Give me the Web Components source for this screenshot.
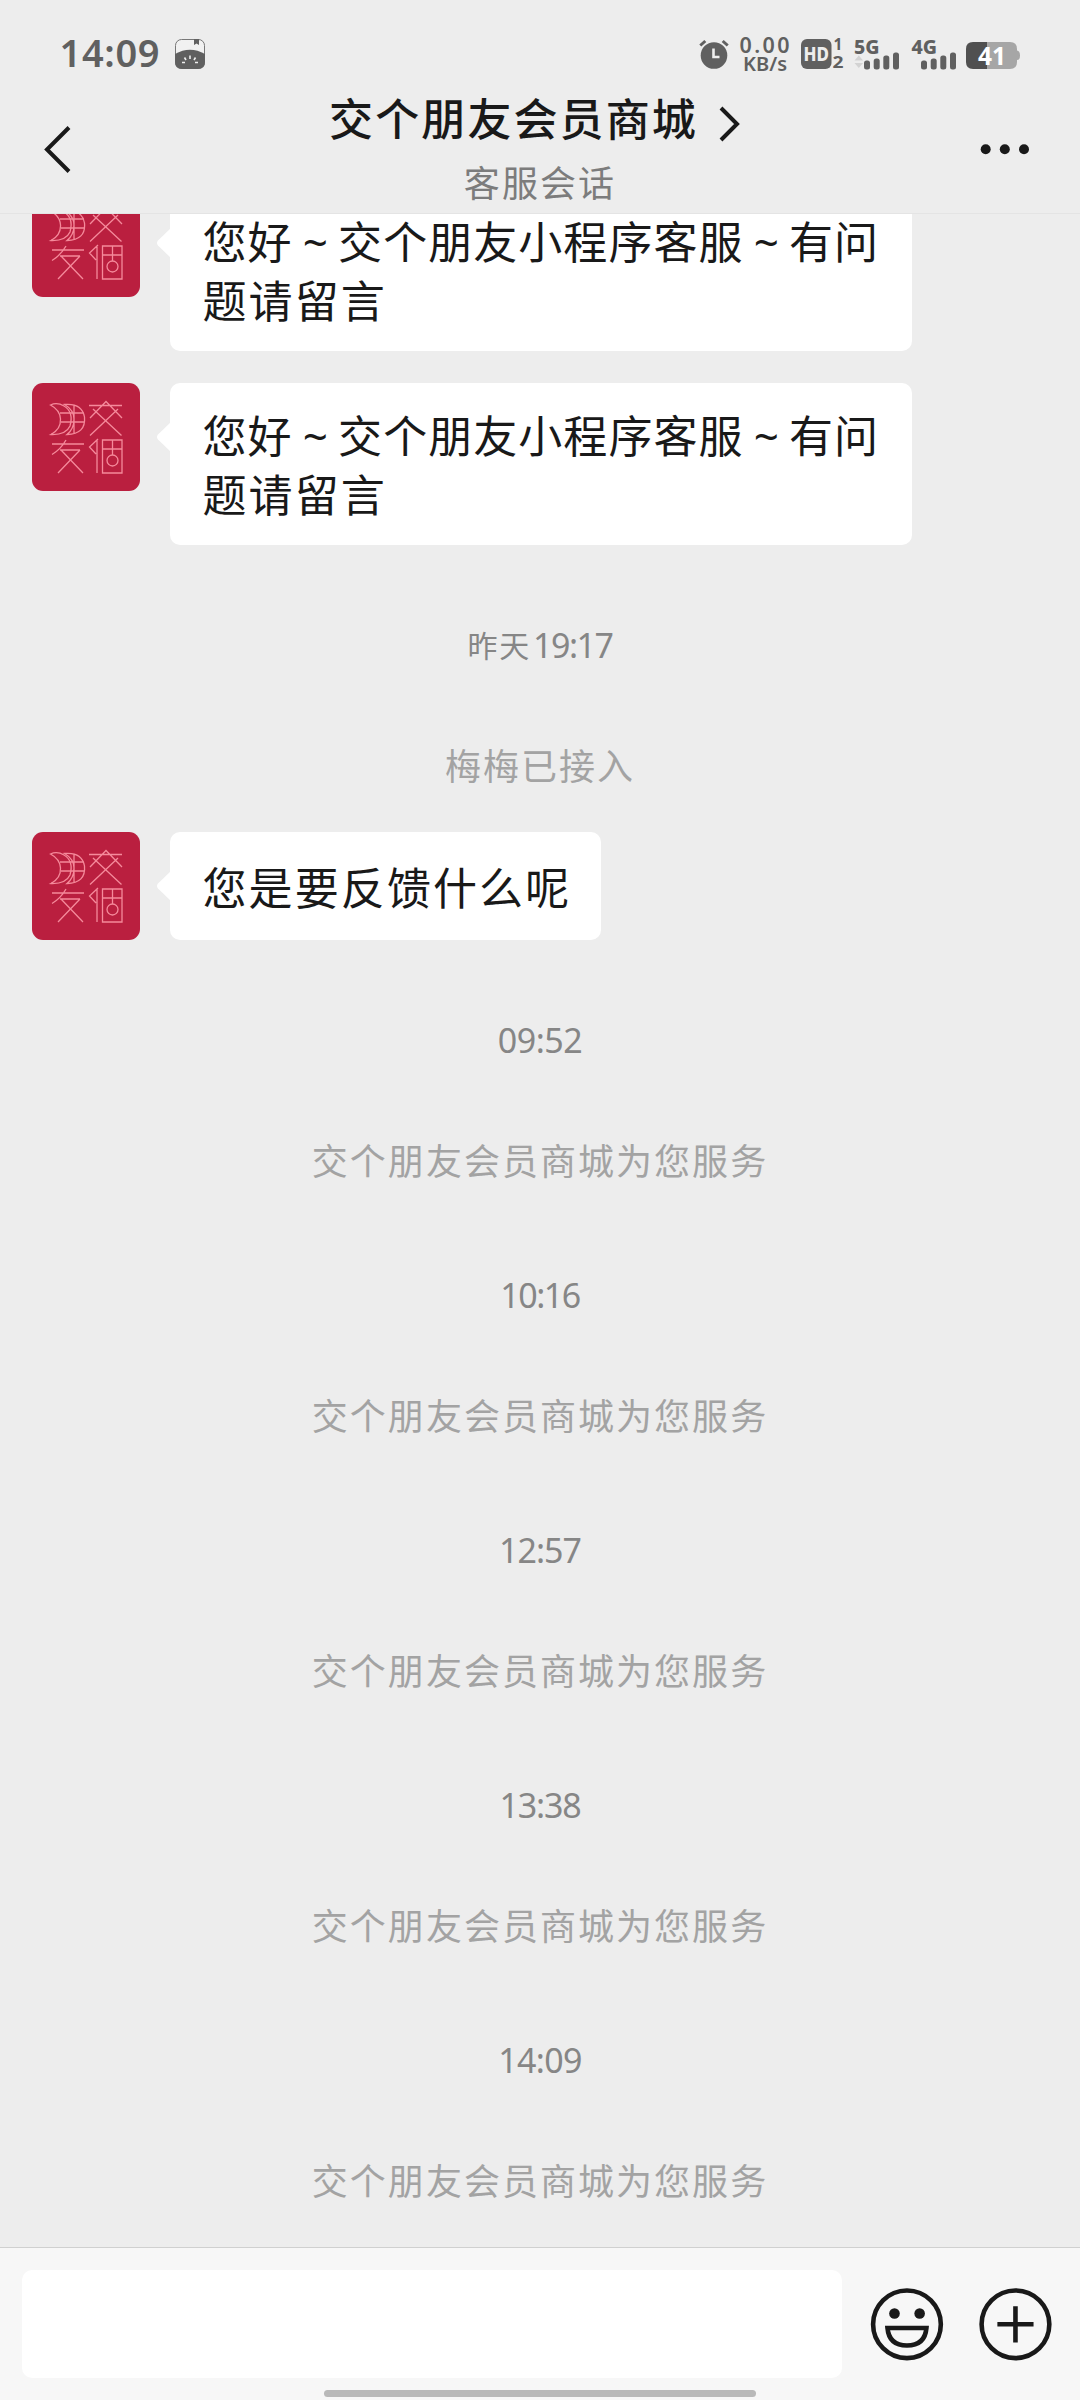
<!DOCTYPE html>
<html lang="zh-CN">
<head>
<meta charset="utf-8">
<title>交个朋友会员商城</title>
<style>
html,body{margin:0;padding:0}
body{background:#ededed;font-family:"Noto Sans CJK SC","Noto Sans",sans-serif;color:#191919}
</style>
</head>
<body>
<chat-app></chat-app>
<script>
function define(name, html) {
  const t = document.createElement('template');
  t.innerHTML = html;
  customElements.define(name, class extends HTMLElement {
    constructor() {
      super();
      this.attachShadow({mode: 'open'}).appendChild(t.content.cloneNode(true));
    }
  });
}

define('status-bar', `<style>
:host{display:flex;justify-content:space-between;height:80px;flex:none;color:#606060}
svg{display:block;font-family:"Noto Sans",sans-serif;fill:#606060}
</style>
<svg width="240" height="80" viewBox="0 0 240 80">
  <text x="59.500" y="67" font-size="38" font-weight="600" textLength="100">14:09</text>
  <rect x="175.500" y="39.500" width="29" height="29" rx="6" fill="#f1f1f1" stroke="#777" stroke-width="1"/>
  <path d="M175 54Q190 45.500 205 54V62Q205 69 198 69H182Q175 69 175 62Z"/>
  <path d="M194 39h5v6l-2.500-1.500-2.500 1.500z"/>
  <path d="M190 55.500v3.500M184.500 57.500l1.500 2.500M195.500 57.500l-1.500 2.500M182 62.500h3M195 62.500h3" stroke="#eee" stroke-width="1.600" fill="none"/>
</svg>
<svg width="400" height="80" viewBox="680 0 400 80">
  <circle cx="714" cy="55.500" r="13.300"/>
  <path d="M700.300 45.500l5-4.500M727.700 45.500l-5-4.500" stroke="#606060" stroke-width="3"/>
  <path d="M713.500 48.500v8.500h6" fill="none" stroke="#eee" stroke-width="2.600"/>
  <text x="739.500" y="52.500" font-size="21.500" font-weight="600" textLength="50">0.00</text>
  <text x="743" y="70.500" font-size="19" font-weight="600" textLength="44" lengthAdjust="spacingAndGlyphs">KB/s</text>
  <rect x="801" y="39" width="30.500" height="30" rx="6"/>
  <text x="803.500" y="61" font-size="20" font-weight="800" fill="#ededed" textLength="25.500" lengthAdjust="spacingAndGlyphs">HD</text>
  <text x="833.500" y="50" font-size="15.500" font-weight="700" textLength="9">1</text>
  <text x="832.500" y="67.500" font-size="16" font-weight="700" textLength="11" lengthAdjust="spacingAndGlyphs">2</text>
  <text x="854" y="53.700" font-size="20" font-weight="800" textLength="25.500" lengthAdjust="spacingAndGlyphs">5G</text>
  <path d="M854.500 60.500l4.300-5 4.300 5zM854.500 63l4.300 5 4.300-5z" fill="#d3d3d3"/>
  <rect x="864" y="60.500" width="6" height="9" rx="2.500"/><rect x="873.700" y="58.500" width="6" height="11" rx="2.500"/><rect x="883.300" y="55.500" width="6" height="14" rx="2.500"/><rect x="893" y="52.500" width="6" height="17" rx="2.500"/>
  <text x="911.500" y="53.700" font-size="20" font-weight="800" textLength="25.500" lengthAdjust="spacingAndGlyphs">4G</text>
  <rect x="921" y="60.500" width="6" height="9" rx="2.500"/><rect x="930.700" y="58.500" width="6" height="11" rx="2.500"/><rect x="940.300" y="55.500" width="6" height="14" rx="2.500"/><rect x="950" y="52.500" width="6" height="17" rx="2.500"/>
  <path d="M973 42H1010Q1017 42 1017 49V50.500Q1020 51 1020 55.500T1017 60V62Q1017 69 1010 69H973Z" fill="#a6a6a6"/>
  <path d="M987 42V69H973Q966 69 966 62V49Q966 42 973 42Z" fill="#505050"/>
  <text x="978" y="64.500" font-size="24.500" font-weight="700" fill="#fff" textLength="28">41</text>
</svg>`);

define('chat-header', `<style>
:host{display:grid;grid-template-columns:160px 1fr 160px;height:133px;flex:none;border-bottom:1px solid #e4e4e4;background:#ededed;position:relative;z-index:1}
.mid{display:flex;flex-direction:column;align-items:center}
.title{display:flex;align-items:center;font-size:44px;font-weight:500;letter-spacing:2.100px;height:60px;line-height:60px;margin:7px 10px 0 0;white-space:nowrap}
.title svg{margin:13px 0 0 21px}
.sub{font-size:36px;letter-spacing:2.100px;color:#7c7c7c;line-height:60px;height:60px;margin-top:4px}
svg{display:block}
</style>
<svg width="160" height="133" viewBox="0 80 160 133"><path d="M69 127.500L47 149.500L69 171.500" fill="none" stroke="#191919" stroke-width="4"/></svg>
<div class="mid"><div class="title"><span><slot name="title"></slot></span><svg width="22" height="36" viewBox="0 0 22 36"><path d="M2 2l16 16-16 16" fill="none" stroke="#191919" stroke-width="4"/></svg></div><div class="sub"><slot name="sub"></slot></div></div>
<svg width="160" height="133" viewBox="920 80 160 133" fill="#191919"><circle cx="985.700" cy="149.300" r="5"/><circle cx="1004.800" cy="149.300" r="5"/><circle cx="1024" cy="149.300" r="5"/></svg>`);

define('brand-avatar', `<style>:host{display:block;width:108px;height:108px;flex:none}svg{display:block}</style>
<svg width="108" height="108" viewBox="0 0 108 108"><rect width="108" height="108" rx="11" fill="#ba1f3f"/>
<g fill="none" stroke="#f58a9b" stroke-width="1.300">
<path d="M18.500 22Q25 19 32 23Q42 29 38 43Q34 52 19 51.500Q29 46 28.500 36Q28 27 18.500 22Z"/>
<path d="M32.500 21.500Q50 20 52.500 34Q54 51 35 51.500Q42 46 42 36Q42 27 32.500 21.500ZM28 30H52M29 39H52M42 22V51"/>
<path d="M57 22.500H90M58 35L74 18.500L90 35M61 26L89.500 52.500M86 26L58 52.500"/>
<path d="M20 61H52M34 57Q29 66 20 71.500M28 67H48M29 67L51 90M48 67L26 90"/>
<path d="M66 56L57.500 64L64 71M65 57V90M70.500 57H90V90H70.500ZM70.500 66H90M80.500 57V72"/><circle cx="80.500" cy="77.500" r="5.500"/>
</g></svg>`);

define('chat-message', `<style>
:host{display:flex;align-items:flex-start;gap:29.500px;margin:32px 0 0 32px;flex:none}
.b{position:relative;background:#fff;border-radius:10px;padding:22px 30px 22px 33px;box-sizing:border-box;width:var(--bubble,auto);min-height:108px;font-size:44px;letter-spacing:2.100px;line-height:59px;white-space:nowrap}
.b svg{position:absolute;left:-14px;top:39px}
.t{display:block;padding-top:var(--shift,0)}
::slotted(.tight){letter-spacing:1.050px}
</style><brand-avatar></brand-avatar>
<div class="b"><svg width="15" height="30" viewBox="0 0 15 30"><path d="M15 0L2 12.500Q0 15 2 17.500L15 30Z" fill="#fff"/></svg><span class="t"><slot></slot></span></div>`);

define('wave-mark', `<style>:host{display:inline-block;width:45.500px;text-align:center;letter-spacing:0;font-family:"Noto Sans",sans-serif;font-size:44px;line-height:40px}</style><slot></slot>`);

define('time-mark', `<style>
:host{display:flex;align-items:center;justify-content:center;height:60px;margin-top:70px;margin-bottom:1px;color:#868686;font:400 34px/60px "Noto Sans","Noto Sans CJK SC",sans-serif;letter-spacing:var(--track,-.5px);flex:none}
::slotted(span){font:400 30px/60px "Noto Sans CJK SC",sans-serif;letter-spacing:1.800px;margin:0 2px 2px 0}
</style><slot></slot>`);

define('system-note', `<style>
:host{display:block;text-align:center;height:60px;margin:58px 0 6px;color:#a3a3a3;font-size:36px;line-height:60px;letter-spacing:2.030px;flex:none}
</style><slot></slot>`);

define('chat-input-bar', `<style>
:host{display:flex;flex-direction:column;align-items:center;height:153px;box-sizing:border-box;flex:none;background:#f7f7f7;border-top:1px solid #d0d0d0}
.row{display:flex;align-items:center;align-self:stretch;height:108px;padding:22px 28px 0 22px}
.field{width:821px;height:108px;border-radius:10px;background:#fff;margin-right:28px}
svg{display:block;margin-right:34px}svg:last-child{margin:0}
.home{width:432px;height:7px;border-radius:4px;background:#b9b9b9;margin-top:12px}
</style><div class="row"><div class="field"></div>
<svg width="74" height="74" viewBox="0 0 74 74" fill="none" stroke="#191919" stroke-width="4.600"><circle cx="37" cy="37.300" r="33.900"/><circle cx="24.500" cy="26.500" r="5.300" fill="#191919" stroke="none"/><circle cx="49.700" cy="26.500" r="5.300" fill="#191919" stroke="none"/><path d="M17.500 41H56.500Q55 58.500 37 58.500T17.500 41Z"/></svg>
<svg width="74" height="74" viewBox="0 0 74 74" fill="none" stroke="#191919" stroke-width="4.600"><circle cx="37.500" cy="37.300" r="33.900"/><path d="M37.500 19.300V55.500M19.400 37.300H55.600"/></svg></div>
<div class="home"></div>`);

define('chat-app', `<style>
:host{display:flex;flex-direction:column;width:1080px;height:2400px;overflow:hidden;background:#ededed}
.list{display:flex;flex-direction:column;flex:1;min-height:0;overflow:hidden}
.list>chat-message{align-self:flex-start}
.wide{--bubble:742.500px}
.first{margin-top:-25px}
</style>
<status-bar></status-bar>
<chat-header><span slot="title">交个朋友会员商城</span><span slot="sub">客服会话</span></chat-header>
<div class="list">
<chat-message class="wide first"><span class="tight">您好<wave-mark>~</wave-mark>交个朋友小程序客服<wave-mark>~</wave-mark>有问</span><br>题请留言</chat-message>
<chat-message class="wide"><span class="tight">您好<wave-mark>~</wave-mark>交个朋友小程序客服<wave-mark>~</wave-mark>有问</span><br>题请留言</chat-message>
<time-mark style="--track:-1.500px"><span>昨天</span>19:17</time-mark>
<system-note>梅梅已接入</system-note>
<chat-message style="--shift:3px">您是要反馈什么呢</chat-message>
<time-mark>09:52</time-mark>
<system-note>交个朋友会员商城为您服务</system-note>
<time-mark style="--track:-1.500px">10:16</time-mark>
<system-note>交个朋友会员商城为您服务</system-note>
<time-mark style="--track:-1px">12:57</time-mark>
<system-note>交个朋友会员商城为您服务</system-note>
<time-mark style="--track:-1.200px">13:38</time-mark>
<system-note>交个朋友会员商城为您服务</system-note>
<time-mark style="--track:-.7px">14:09</time-mark>
<system-note>交个朋友会员商城为您服务</system-note>
</div>
<chat-input-bar></chat-input-bar>`);
</script>
</body>
</html>
